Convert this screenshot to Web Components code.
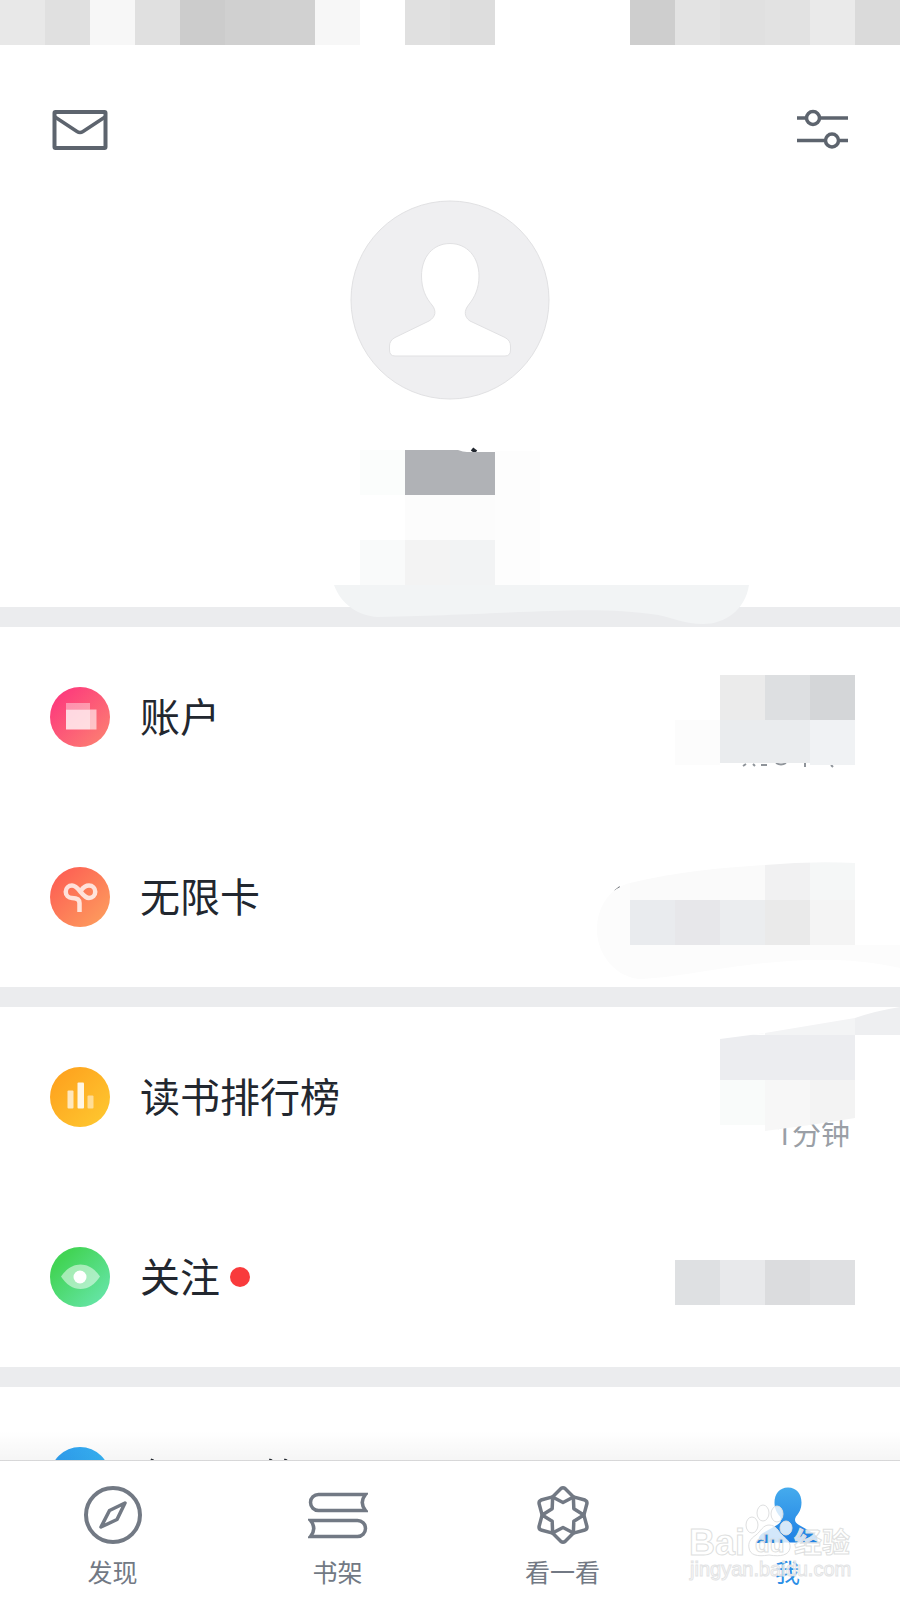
<!DOCTYPE html>
<html lang="zh-CN">
<head>
<meta charset="utf-8">
<meta name="viewport" content="width=device-width, initial-scale=1">
<title>我</title>
<style>
  :root {
    --color-text: #22272f;
    --color-muted: #9a9fa6;
    --color-icon: #5d646e;
    --color-nav: #727984;
    --color-active: #2b8ee6;
    --color-band: #ebecee;
    --gutter: 50px;
  }

  body {
    margin: 0;
    background: #fff;
    color: var(--color-text);
    font-family: "Noto Sans CJK SC", "Noto Sans", sans-serif;
  }
</style>
</head>
<body>
<profile-app>
  <status-strip slot="status"></status-strip>
  <profile-header></profile-header>

  <menu-group>
    <menu-row icon="account" href="#account">账户</menu-row>
    <menu-row icon="infinite" href="#card">无限卡</menu-row>
    <pixel-mask slot="mask" name="account"></pixel-mask>
  </menu-group>

  <menu-group>
    <menu-row icon="rank" href="#rank">读书排行榜<span slot="value">1分钟</span></menu-row>
    <menu-row icon="follow" href="#follow" unread>关注</menu-row>
    <pixel-mask slot="mask" name="reading"></pixel-mask>
  </menu-group>

  <menu-group>
    <menu-row icon="more" href="#more"><app-icon name="peek"></app-icon></menu-row>
  </menu-group>

  <tab-bar slot="tabs">
    <tab-item icon="compass" href="#discover">发现</tab-item>
    <tab-item icon="books" href="#shelf">书架</tab-item>
    <tab-item icon="flower" href="#look">看一看</tab-item>
    <tab-item icon="me" href="#me" active>我</tab-item>
    <site-watermark slot="overlay"></site-watermark>
  </tab-bar>
</profile-app>

<script>
  // Each icon: [viewBox width, viewBox height, markup]
  const ICONS = {
    mail: [60, 60, `
      <g fill="none" stroke="currentColor" stroke-width="4" stroke-linejoin="round">
        <rect x="4.500" y="12" width="51" height="36" rx="1"/>
        <path d="M5 17L27 31.500Q30 33.500 33 31.500L55 17" stroke-width="3.500"/>
      </g>`],
    sliders: [60, 60, `
      <g fill="none" stroke="currentColor" stroke-width="3.500">
        <path d="M7 18H16M30 18H58M7 40.500H35M49 40.500H58"/>
        <circle cx="23" cy="18" r="6.500"/>
        <circle cx="42" cy="40.500" r="6.500"/>
      </g>`],
    avatar: [200, 200, `
      <circle cx="100" cy="100" r="99" fill="#efeff1" stroke="#e1e1e3"/>
      <path d="M100 43.500C83 43.500 71.500 57 71.500 76C71.500 89 76 98 82 105C86.500 110.500 86 117 79 121L45 137.500Q39.500 140.500 39.500 146V150Q39.500 156 45 156H155Q160.500 156 160.500 150V146Q160.500 140.500 155 137.500L120 121C114 117 114 110.500 118.500 105C125 97 129 88 129 76C129 57 117 43.500 100 43.500Z" fill="#fff" stroke="#e1e1e3"/>`],
    account: [60, 60, `
      <linearGradient id="g" x1="0" y1="0" x2="1" y2="1"><stop offset=".15" stop-color="#fd3c7c"/><stop offset=".9" stop-color="#fc7d72"/></linearGradient>
      <circle cx="30" cy="30" r="30" fill="url(#g)"/>
      <g fill="#fff">
        <path d="M16 16H40V22.500H16Z" opacity=".4"/>
        <path d="M16 22.500H40V42.500H16Z" opacity=".78"/>
        <path d="M40 22.500H46.500V42.500H40Z" opacity=".6"/>
      </g>`],
    infinite: [60, 60, `
      <linearGradient id="g" x1="0" y1="0" x2="1" y2="1"><stop offset=".15" stop-color="#fd6254"/><stop offset=".9" stop-color="#fd9b5d"/></linearGradient>
      <circle cx="30" cy="30" r="30" fill="url(#g)"/>
      <g fill="none" stroke="#fff" stroke-width="4.500" opacity=".78">
        <path d="M29.500 45V36Q29.500 31 22 31A6 6 0 0 1 22 18.500C29 18.500 32 31 39 31A6 6 0 0 0 39 18.500C35.500 18.500 33.500 20 31 23.500"/>
      </g>`],
    rank: [60, 60, `
      <linearGradient id="g" x1="0" y1="0" x2="1" y2="1"><stop offset=".15" stop-color="#fea41f"/><stop offset=".9" stop-color="#fec62f"/></linearGradient>
      <circle cx="30" cy="30" r="30" fill="url(#g)"/>
      <g fill="#fff">
        <rect x="17.500" y="23.500" width="6" height="18" rx="1" opacity=".7"/>
        <rect x="27.500" y="15.500" width="6.500" height="26" rx="1" opacity=".88"/>
        <rect x="37.500" y="28.500" width="6" height="13" rx="1" opacity=".5"/>
      </g>`],
    follow: [60, 60, `
      <linearGradient id="g" x1="0" y1="0" x2="1" y2="1"><stop offset=".2" stop-color="#42d455"/><stop offset=".9" stop-color="#66e5a8"/></linearGradient>
      <circle cx="30" cy="30" r="30" fill="url(#g)"/>
      <path d="M11 29.500C16 22 23 17.500 30.500 17.500S45 22 50 29.500C45 37.500 38 42 30.500 42S16 37.500 11 29.500Z" fill="#fff" opacity=".5"/>
      <circle cx="30" cy="30" r="6.500" fill="#fff"/>`],
    more: [60, 60, `
      <linearGradient id="g"><stop offset=".1" stop-color="#2f9ff0"/><stop offset=".9" stop-color="#36b2f4"/></linearGradient>
      <circle cx="30" cy="30" r="30" fill="url(#g)"/>`],
    peek: [160, 60, `
      <path d="M12.500 14L10 21M131 14L128 21M146 14L143 21" stroke="currentColor" stroke-width="3" fill="none"/>`],
    compass: [60, 60, `
      <g fill="none" stroke="currentColor" stroke-width="4" stroke-linejoin="round">
        <circle cx="30" cy="30" r="27"/>
        <path d="M42 18L26.500 25.500L18 42L34 34.500Z" stroke-width="3.500"/>
      </g>`],
    books: [60, 60, `
      <g fill="none" stroke="currentColor" stroke-width="3.500">
        <path d="M57.500 9.500H10.500A8 8 0 0 0 10.500 25.500H57.500Q51 17.500 57.500 9.500Z"/>
        <path d="M2.500 35.500H49.500A8 8 0 0 1 49.500 51.500H2.500Q9 43.500 2.500 35.500Z"/>
      </g>`],
    flower: [60, 60, `
      <g fill="none" stroke="currentColor" stroke-width="3.500" stroke-linejoin="round" transform="translate(30 30)">
        ${[0, 60, 120, 180, 240, 300].map((a) => `
          <path transform="rotate(${a})" d="M-10.500 -18L-2 -26.500Q0 -28 2 -26.500L10.500 -18L0 -12.500Z"/>`).join('')}
      </g>`],
    me: [60, 60, `
      <linearGradient id="g" x1="0" y1="0" x2="0" y2="1"><stop stop-color="#45abed"/><stop offset="1" stop-color="#1f80e4"/></linearGradient>
      <path d="M30 2.500C21.500 2.500 16.500 9 16.500 17.500C16.500 24 19 28 22 31.500C24 35 23 38 19 40L5 48Q1 50.500 .5 54V57.500H59.500V54Q59 50.500 55 48L41 40C37 38 36 35 38 31.500C41 28 43.500 24 43.500 17.500C43.500 9 38.500 2.500 30 2.500Z" fill="url(#g)"/>`]
  };

  class AppIcon extends HTMLElement {
    constructor() {
      super();
      this.attachShadow({ mode: 'open' });
    }

    connectedCallback() {
      const [w, h, markup] = ICONS[this.getAttribute('name')];
      this.shadowRoot.innerHTML = `
        <style>
          :host { display: block; flex: none; }
          svg { display: block; }
        </style>
        <svg width="${w}" height="${h}" viewBox="0 0 ${w} ${h}" aria-hidden="true">${markup}</svg>
      `;
    }
  }

  // Row of pixelated cells in place of the system status bar
  class StatusStrip extends HTMLElement {
    constructor() {
      super();
      this.attachShadow({ mode: 'open' });
      const cells = [
        '#e8e8e8', '#e0e0e0', '#f7f7f7', '#e0e0e0', '#cccccc', '#d0d0d0', '#d1d1d1',
        '#f7f7f7', '#ffffff', '#e0e0e0', '#dddddd', '#ffffff', '#ffffff', '#ffffff',
        '#cecece', '#e3e3e3', '#e0e0e0', '#e2e2e2', '#eaeaea', '#dadada'
      ];
      this.shadowRoot.innerHTML = `
        <style>
          :host {
            display: grid;
            grid-template-columns: repeat(20, 1fr);
            height: 45px;
          }
        </style>
        ${cells.map((c) => `<i style="background:${c}"></i>`).join('')}
      `;
    }
  }

  // x, y, width, height, colour
  const cell = ([x, y, w, h, c]) => `<rect x="${x}" y="${y}" width="${w}" height="${h}" fill="${c}"/>`;

  const MASKS = {
    name: ['300 427 480 200', `
      ${[
        [360, 450, 45, 45, '#fbfdfc'], [495, 451, 45, 44, '#fdfdfd'],
        [405, 495, 90, 45, '#fcfcfc'], [495, 495, 45, 45, '#fdfdfd'],
        [360, 540, 45, 45, '#f9fafa'], [405, 540, 45, 45, '#f3f3f3'],
        [450, 540, 45, 45, '#f2f3f4'], [495, 540, 45, 45, '#fdfdfd']
      ].map(cell).join('')}
      <path d="M472 449L476 452" stroke="#22272f" stroke-width="4"/>
      <path d="M405 450H458Q463 452 467 452H495V495H405Z" fill="#b0b2b6"/>
      <path d="M334 585H749C745 611 724 624 703 624C685 624 674 618 658 615C590 605 540 613 378 617C358 616 341 604 334 585Z" fill="#f2f4f5"/>`],
    account: ['580 627 320 360', `
      <g fill="none" stroke="#8f949a" stroke-width="2">
        <path d="M746 764L743 766M753 764L755 766M761 765H767M776 763Q781 766 786 763M805 762V767M831 765L833 767"/>
      </g>
      ${[
        [720, 675, 45, 45, '#ebebeb'], [765, 675, 45, 45, '#dddfe1'], [810, 675, 45, 45, '#d4d6d8'],
        [675, 720, 45, 45, '#fcfcfc'], [720, 720, 90, 43, '#eaecee'], [810, 720, 45, 45, '#f0f2f4']
      ].map(cell).join('')}
      <path d="M615 891L620 887" stroke="#555a61" stroke-width="2"/>
      <clipPath id="c"><path d="M597 930C597 906 610 888 630 883C675 872 720 868 765 865Q810 861 855 863V945H900V968C800 945 700 977 642 979C617 979 597 955 597 930Z"/></clipPath>
      <g clip-path="url(#c)">
        ${[
          [595, 860, 35, 85, '#fcfcfc'], [630, 860, 135, 40, '#fafafa'],
          [765, 860, 45, 40, '#f1f1f2'], [810, 860, 45, 40, '#f5f7f7'],
          [630, 900, 45, 45, '#e9ebee'], [675, 900, 45, 45, '#e7e7ea'], [720, 900, 45, 45, '#ebedef'],
          [765, 900, 45, 45, '#eaeaea'], [810, 900, 45, 45, '#f4f4f4'], [595, 945, 305, 40, '#fcfcfc']
        ].map(cell).join('')}
      </g>`],
    reading: ['580 1007 320 360', `
      <path d="M720 1039L765 1033L855 1018V1035H720Z" fill="#f3f4f5"/>
      <path d="M855 1018Q875 1011 900 1007V1035H855Z" fill="#eeeff1"/>
      ${[
        [720, 1035, 135, 45, '#ecedf0'], [720, 1080, 45, 45, '#f9fbfa'],
        [675, 1260, 45, 45, '#dee0e2'], [720, 1260, 45, 45, '#e8e9eb'],
        [765, 1260, 45, 45, '#dbdcde'], [810, 1260, 45, 45, '#dfe0e2']
      ].map(cell).join('')}
      <path d="M720 1035H765V1033L720 1039Z" fill="#fff"/>
      <path d="M765 1080H810V1125L765 1131Z" fill="#f7f7f7"/>
      <path d="M810 1080H855V1118L810 1125Z" fill="#f3f3f3"/>`]
  };

  class PixelMask extends HTMLElement {
    constructor() {
      super();
      this.attachShadow({ mode: 'open' });
    }

    connectedCallback() {
      const [box, markup] = MASKS[this.getAttribute('name')];
      const [, , w, h] = box.split(' ');
      this.shadowRoot.innerHTML = `
        <style>
          :host { display: block; pointer-events: none; }
          svg { display: block; }
        </style>
        <svg width="${w}" height="${h}" viewBox="${box}" aria-hidden="true">${markup}</svg>
      `;
    }
  }

  class ProfileHeader extends HTMLElement {
    constructor() {
      super();
      this.attachShadow({ mode: 'open' });
      this.shadowRoot.innerHTML = `
        <style>
          :host {
            display: flex;
            flex-direction: column;
            align-items: center;
            position: relative;
            z-index: 1;
            padding-bottom: 207px;
          }
          .toolbar {
            align-self: stretch;
            display: flex;
            justify-content: space-between;
            padding: 55px var(--gutter) 40px;
          }
          button {
            border: 0;
            padding: 0;
            background: none;
            color: var(--color-icon);
            cursor: pointer;
          }
          /* lies over the name and the top of the next group */
          pixel-mask {
            position: absolute;
            bottom: -20px;
            left: calc(50% - 150px);
          }
        </style>
        <div class="toolbar">
          <button type="button" aria-label="消息"><app-icon name="mail"></app-icon></button>
          <button type="button" aria-label="设置"><app-icon name="sliders"></app-icon></button>
        </div>
        <button type="button" aria-label="头像"><app-icon name="avatar"></app-icon></button>
        <pixel-mask name="name"></pixel-mask>
      `;
    }
  }

  class MenuGroup extends HTMLElement {
    constructor() {
      super();
      this.attachShadow({ mode: 'open' });
      this.shadowRoot.innerHTML = `
        <style>
          :host {
            display: block;
            position: relative;
            border-top: 20px solid var(--color-band);
          }
          ::slotted([slot="mask"]) {
            position: absolute;
            top: 0;
            right: 0;
          }
        </style>
        <slot></slot>
        <slot name="mask"></slot>
      `;
    }
  }

  class MenuRow extends HTMLElement {
    constructor() {
      super();
      this.attachShadow({ mode: 'open' });
    }

    connectedCallback() {
      this.shadowRoot.innerHTML = `
        <style>
          :host { display: block; }
          a {
            display: flex;
            align-items: center;
            gap: 30px;
            height: 180px;
            padding: 0 var(--gutter);
            color: inherit;
            text-decoration: none;
          }
          .label {
            padding-bottom: 4px;
            font-size: 40px;
            line-height: 60px;
          }
          .dot {
            width: 20px;
            height: 20px;
            margin-left: -20px;
            border-radius: 50%;
            background: #f93a3c;
          }
          .value {
            display: flex;
            flex-direction: column;
            justify-content: flex-end;
            min-height: 116px;
            margin-left: auto;
            color: var(--color-muted);
            font-family: Roboto, "Noto Sans CJK SC", sans-serif;
            font-size: 29px;
            line-height: 40px;
          }
        </style>
        <a href="${this.getAttribute('href')}">
          <app-icon name="${this.getAttribute('icon')}"></app-icon>
          <span class="label"><slot></slot></span>
          ${this.hasAttribute('unread') ? '<i class="dot"></i>' : ''}
          <span class="value"><slot name="value"></slot></span>
        </a>
      `;
    }
  }

  class TabBar extends HTMLElement {
    constructor() {
      super();
      this.attachShadow({ mode: 'open' });
      this.shadowRoot.innerHTML = `
        <style>
          :host {
            display: block;
            position: relative;
            background: #fff;
            border-top: 1px solid #e0e0e1;
          }
          /* soft shade over the list just above the bar */
          :host::before {
            content: "";
            position: absolute;
            right: 0;
            bottom: 100%;
            left: 0;
            height: 30px;
            background: linear-gradient(rgba(0, 0, 0, 0), rgba(0, 0, 0, 0.04));
          }
          nav {
            display: grid;
            grid-template-columns: repeat(4, 1fr);
          }
          ::slotted([slot="overlay"]) {
            position: absolute;
            top: 20px;
            right: 40px;
          }
        </style>
        <nav><slot></slot></nav>
        <slot name="overlay"></slot>
      `;
    }
  }

  class TabItem extends HTMLElement {
    constructor() {
      super();
      this.attachShadow({ mode: 'open' });
    }

    connectedCallback() {
      this.shadowRoot.innerHTML = `
        <style>
          :host {
            display: block;
            color: var(--color-nav);
          }
          :host([active]) { color: var(--color-active); }
          a {
            display: flex;
            flex-direction: column;
            align-items: center;
            gap: 8px;
            padding: 24px 0 11px;
            color: inherit;
            font-size: 25px;
            line-height: 36px;
            text-decoration: none;
          }
        </style>
        <a href="${this.getAttribute('href')}">
          <app-icon name="${this.getAttribute('icon')}"></app-icon>
          <span><slot></slot></span>
        </a>
      `;
    }
  }

  class SiteWatermark extends HTMLElement {
    constructor() {
      super();
      this.attachShadow({ mode: 'open' });
      this.shadowRoot.innerHTML = `
        <style>
          :host { display: block; pointer-events: none; }
          svg { display: block; }
          text { font-family: "Liberation Sans", "Noto Sans CJK SC", sans-serif; }
          .outlined {
            fill: rgba(255, 255, 255, 0.8);
            stroke: #dedfe0;
            stroke-width: 1;
          }
          .bold { font-weight: 700; }
          .url {
            fill: rgba(255, 255, 255, 0.6);
            stroke: #e3e4e5;
          }
        </style>
        <svg width="180" height="110" viewBox="680 1480 180 110">
          <linearGradient id="du" gradientUnits="userSpaceOnUse" x1="740" y1="1534" x2="740" y2="1554">
            <stop offset=".4" stop-color="#2b86de"/>
            <stop offset=".4" stop-color="#fff"/>
          </linearGradient>
          <g class="outlined">
            <ellipse cx="752" cy="1524" rx="6" ry="8"/>
            <ellipse cx="763" cy="1512" rx="6" ry="8"/>
            <ellipse cx="777" cy="1513" rx="6" ry="8"/>
            <ellipse cx="786" cy="1527" rx="6" ry="7"/>
            <path d="M769 1524C763 1524 761 1530 756 1534C750 1538 748 1542 749 1547C750 1554 757 1556 769 1554C781 1556 789 1554 790 1547C791 1541 786 1538 782 1534C778 1530 776 1524 769 1524Z"/>
          </g>
          <text class="outlined bold" x="689" y="1554" font-size="36">Bai</text>
          <text class="bold" x="755" y="1551" font-size="24" fill="url(#du)" stroke="#dedfe0" stroke-width="1">du</text>
          <text class="outlined bold" x="794" y="1552" font-size="28">经验</text>
          <text class="outlined url" x="690" y="1575" font-size="20">jingyan.baidu.com</text>
        </svg>
      `;
    }
  }

  class ProfileApp extends HTMLElement {
    constructor() {
      super();
      this.attachShadow({ mode: 'open' });
      this.shadowRoot.innerHTML = `
        <style>
          :host {
            display: flex;
            flex-direction: column;
            height: 100vh;
          }
          main {
            flex: 1;
            min-height: 0;
            overflow: hidden;
          }
        </style>
        <slot name="status"></slot>
        <main><slot></slot></main>
        <slot name="tabs"></slot>
      `;
    }
  }

  customElements.define('app-icon', AppIcon);
  customElements.define('status-strip', StatusStrip);
  customElements.define('pixel-mask', PixelMask);
  customElements.define('profile-header', ProfileHeader);
  customElements.define('menu-row', MenuRow);
  customElements.define('menu-group', MenuGroup);
  customElements.define('tab-item', TabItem);
  customElements.define('tab-bar', TabBar);
  customElements.define('site-watermark', SiteWatermark);
  customElements.define('profile-app', ProfileApp);
</script>
</body>
</html>
